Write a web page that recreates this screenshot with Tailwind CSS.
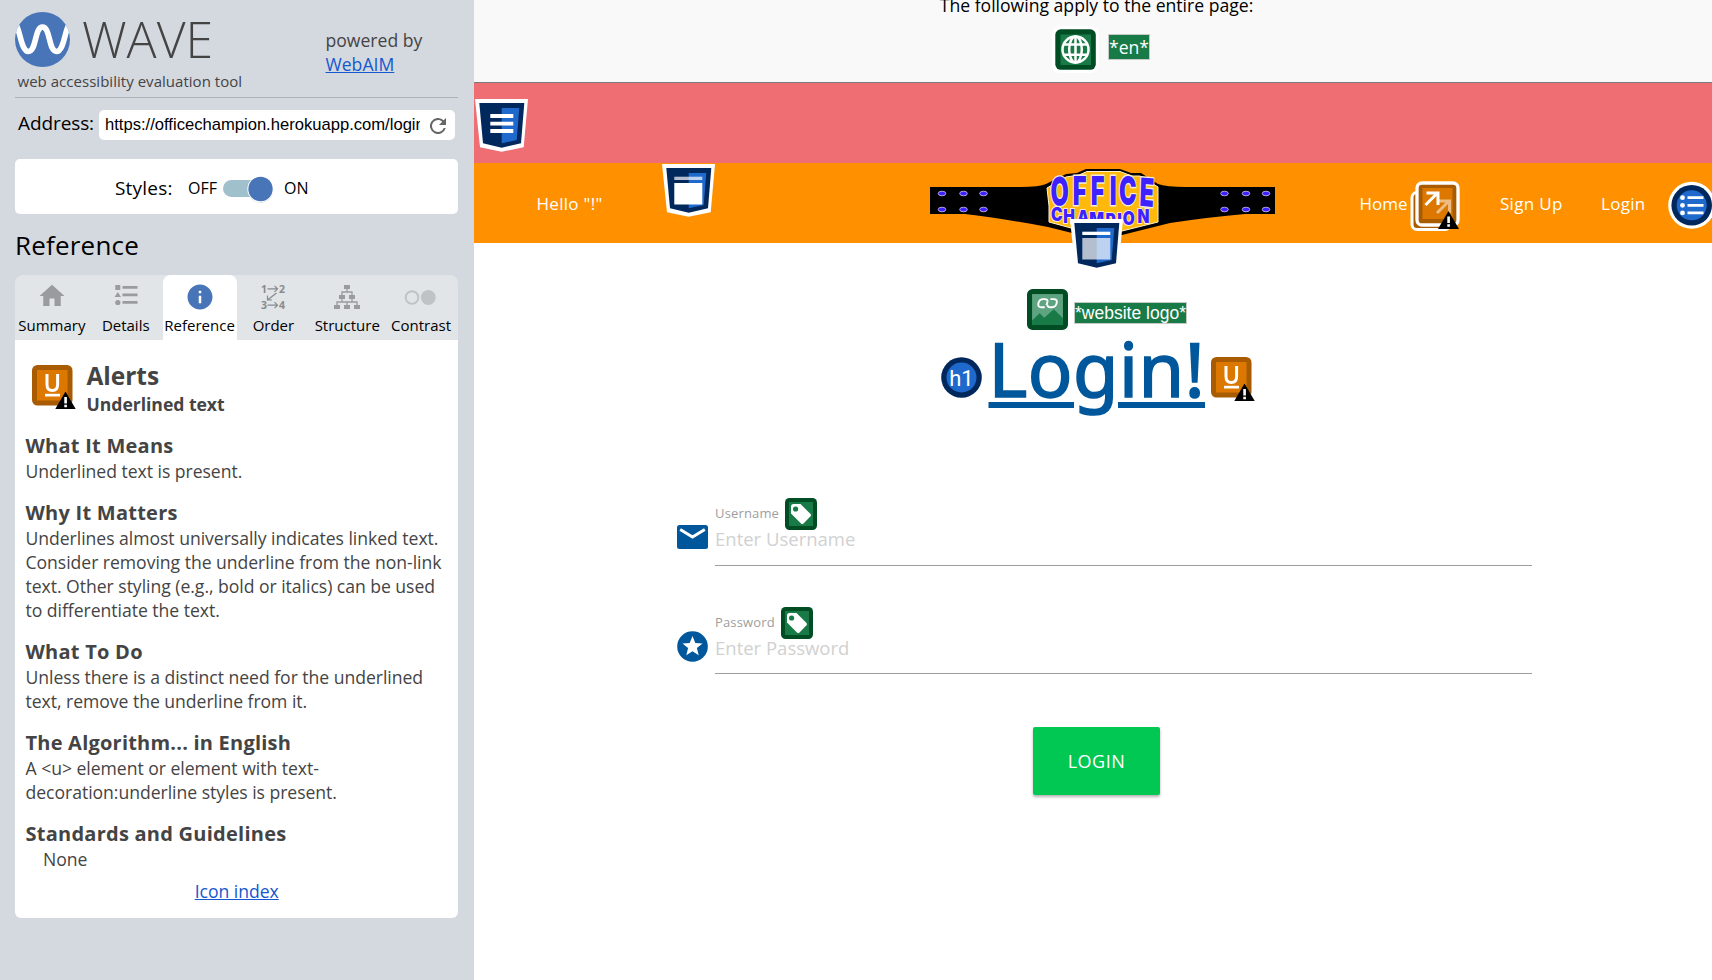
<!DOCTYPE html>
<html lang="en">
<head>
<meta charset="utf-8">
<title>WAVE</title>
<script src="https://cdn.jsdelivr.net/npm/@tailwindcss/browser@4"></script>
</head>
<body class="w-[1712px] h-[980px] overflow-hidden bg-white font-['Open_Sans',sans-serif] text-black">
<svg class="hidden">
  <defs>
    <symbol id="tri" viewBox="0 0 21 18"><path d="M10.5 0L21 18H0Z" fill="#000"/><path d="M9.3 5.500h2.600v6.500h-2.600zM9.300 13.300h2.600v2.400h-2.600z" fill="#fff"/></symbol>
    <symbol id="shield" viewBox="0 0 53 53"><path d="M0 0H53L48.700 48.300L26.600 52.700L5 48.300Z" fill="#fff"/><path d="M4.300 4H49.300L46 44.300L26.700 48.700L8 44.300Z" fill="#00285c"/><path d="M26.700 9H44.300L41.700 41L26.700 44.300Z" fill="#1f69cc"/></symbol>
    <symbol id="tag" viewBox="0 0 32 32"><rect width="32" height="32" rx="4.500" fill="#004d24"/><rect x="4" y="4" width="24" height="24" fill="#187a47"/><path d="M6 8.500A2.500 2.500 0 0 1 8.500 6H15.500L25.500 16Q26.500 17.200 25.500 18.300L18.500 25.500Q17.300 26.500 16 25.500L6 15.500Z" fill="#fff"/><circle cx="10.600" cy="11" r="2.600" fill="#187a47"/></symbol>
    <symbol id="ubadge" viewBox="0 0 44 44"><rect width="40.500" height="40.500" rx="5.500" fill="#a85b00"/><rect x="5" y="5" width="30.500" height="30.500" fill="#dc7800"/><path d="M15 9V19.500Q15 25.500 20.300 25.500Q25.600 25.500 25.600 19.500V9" fill="none" stroke="#fff" stroke-width="3"/><path d="M13 28.800H28V31.500H13Z" fill="#fff"/><use href="#tri" x="23" y="26.500" width="21" height="18"/></symbol>
  </defs>
</svg>
<div class="flex h-full">
<aside class="w-[474px] h-full shrink-0 bg-[#d4d8df] pl-[15px] pt-[12px] pr-[16px]">
  <header class="flex h-[86px] border-b border-[#adb2b4] text-[#444]">
    <div class="w-[310px]">
      <div class="flex h-[55px]">
        <svg class="size-[55px]" viewBox="0 0 55 55"><clipPath id="c"><circle cx="27.500" cy="27.500" r="27.500"/></clipPath><circle cx="27.500" cy="27.500" r="27.500" fill="#4775b7"/><path d="M1 13C5 17 6 39.500 13.500 39.500C21.500 39.500 19.500 15 27.500 15C35.500 15 33.500 39.500 41.500 39.500C49 39.500 50 17 54 13" fill="none" stroke="#fff" stroke-width="5.600" clip-path="url(#c)"/></svg>
        <span class="ml-[12px] text-[50px] leading-[55px] font-light whitespace-nowrap">WAVE</span>
      </div>
      <div class="mt-[2px] ml-[2.500px] leading-[24px]"><span class="text-[15px] tracking-[0.030px] whitespace-nowrap">web accessibility evaluation tool</span></div>
    </div>
    <div class="mt-[16px] pl-[0.500px] text-[17.600px] leading-[24px] whitespace-nowrap"><span>powered by</span><br><a class="text-[#1558d0] underline">WebAIM</a></div>
  </header>
  <div class="mt-[12px] flex h-[30px]">
    <div class="w-[84px] pl-[3px] leading-[26px]"><span class="text-[19px] tracking-[-0.100px] whitespace-nowrap">Address:</span></div>
    <div class="flex h-[30px] w-[356px] items-center rounded-[5px] bg-white pl-[6px]">
      <div class="w-[315px] overflow-hidden leading-[28px] whitespace-nowrap font-['Liberation_Sans',sans-serif] text-[16.600px]">https://officechampion.herokuapp.com/login</div>
      <svg class="ml-[9.500px] mt-px size-[16px]" viewBox="0 0 16 16"><path d="M13.650 2.350A8 8 0 1 0 15.730 10H13.650A6 6 0 1 1 8 2c1.660 0 3.140.690 4.220 1.780L9 7h7V0l-2.350 2.350z" fill="#666"/></svg>
    </div>
  </div>
  <div class="mt-[19px] flex h-[55px] items-center rounded-[5px] bg-white pl-[100px] pt-[3px]">
    <div class="w-[73px]"><span class="text-[19px] tracking-[0.200px] whitespace-nowrap">Styles:</span></div>
    <div class="w-[35px]"><span class="text-[16px]">OFF</span></div>
    <svg class="h-[32px] w-[54px]" viewBox="0 0 54 32"><rect x="0" y="8" width="46" height="17" rx="8.500" fill="#a0c1cb"/><circle cx="37.500" cy="18" r="12.800" fill="#000" opacity=".15"/><circle cx="37.500" cy="17" r="13.200" fill="#fff"/><circle cx="37.500" cy="17" r="12.200" fill="#4775b7"/></svg>
    <div class="ml-[7px]"><span class="text-[16px]">ON</span></div>
  </div>
  <h1 class="mt-[14px] h-[47px] leading-[34px] tracking-[0.200px] text-[26px] whitespace-nowrap">Reference</h1>
  <nav class="grid grid-cols-6 h-[65px] rounded-t-[8px] bg-[#e1e5e8] text-[15px] leading-[20px] text-center whitespace-nowrap">
    <div class="flex flex-col items-center pt-[7px]"><svg class="-mt-px mb-px ml-px size-[30px] shrink-0" viewBox="0 0 24 24"><path d="M10 20v-6h4v6h5v-8h3L12 3 2 12h3v8z" fill="#999b9d"/></svg><span class="mt-[3px]">Summary</span></div>
    <div class="flex flex-col items-center pt-[7px]"><svg class="size-[30px] shrink-0" viewBox="0 0 30 30" fill="#999b9d"><path d="M4.300 3h5v5h-5zM6.800 10l3.200 5H3.600z"/><circle cx="6.800" cy="20.500" r="2.600"/><path d="M11.500 4h15v2.700h-15zM11.500 11.500h15v2.700h-15zM11.500 19h15v2.700h-15z"/></svg><span class="mt-[3px]">Details</span></div>
    <div class="flex flex-col items-center rounded-t-[8px] bg-white pt-[7px]"><svg class="size-[30px] shrink-0" viewBox="0 0 24 24"><path d="M12 2C6.480 2 2 6.480 2 12s4.480 10 10 10 10-4.480 10-10S17.520 2 12 2zm1 15h-2v-6h2v6zm0-8h-2V7h2v2z" fill="#4775b7"/></svg><span class="mt-[3px]">Reference</span></div>
    <div class="flex flex-col items-center pt-[7px]"><svg class="size-[30px] shrink-0" viewBox="0 0 30 30" fill="#888b8d" font-family="Open Sans" font-size="10.500" font-weight="700"><text x="3" y="10.500">1</text><text x="21" y="10.500">2</text><text x="3" y="27">3</text><text x="21" y="27">4</text><path d="M9.500 6.800h10M16.500 3.800l3 3-3 3M9.500 23.200h10M16.500 20.200l3 3-3 3M18.500 11l-9 7M9.500 13.500v4.500h4.500" fill="none" stroke="#888b8d" stroke-width="1.200"/></svg><span class="mt-[3px]">Order</span></div>
    <div class="flex flex-col items-center pt-[7px]"><svg class="size-[30px] shrink-0" viewBox="0 0 30 30" fill="#999b9d"><path d="M12 3h6v4h-6zM7 13h6v4H7zM17 13h6v4h-6zM2 23h6v4H2zM12 23h6v4h-6zM22 23h6v4h-6z"/><path d="M15 7v3M10 13v-3h10v3M10 17v3M20 17v3M5 23v-3h20v3M15 20v3" fill="none" stroke="#999b9d" stroke-width="1.300"/></svg><span class="mt-[3px]">Structure</span></div>
    <div class="flex flex-col items-center pt-[7px]"><svg class="h-[30px] w-[32px] shrink-0 -ml-[2px]" viewBox="0 0 32 30"><circle cx="8" cy="15.500" r="6.300" fill="none" stroke="#bfc3c5" stroke-width="2"/><circle cx="24.300" cy="15.500" r="7.400" fill="#bfc3c5"/></svg><span class="mt-[3px]">Contrast</span></div>
  </nav>
  <main class="h-[578px] rounded-b-[6px] bg-white pl-[10.500px] text-[17.600px] leading-[24px] tracking-[-0.035px] text-[#444] whitespace-nowrap">
    <div class="flex pt-[19px] pl-[6.500px]">
      <svg class="mt-[6px] size-[44px]" viewBox="0 0 44 44"><use href="#ubadge"/></svg>
      <div class="ml-[10.500px] font-bold"><div class="h-[32px] leading-[34px] text-[24.500px]">Alerts</div><div class="h-[41px] leading-[26px]">Underlined text</div></div>
    </div>
    <h2 class="leading-[27px] text-[20px] font-bold tracking-[0.250px]">What It Means</h2>
    <p class="mb-[16px]">Underlined text is present.</p>
    <h2 class="leading-[27px] text-[20px] font-bold tracking-[0.250px]">Why It Matters</h2>
    <p class="mb-[16px]">Underlines almost universally indicates linked text.<br>Consider removing the underline from the non-link<br>text. Other styling (e.g., bold or italics) can be used<br>to differentiate the text.</p>
    <h2 class="leading-[27px] text-[20px] font-bold tracking-[0.250px]">What To Do</h2>
    <p class="mb-[16px]">Unless there is a distinct need for the underlined<br>text, remove the underline from it.</p>
    <h2 class="leading-[27px] text-[20px] font-bold tracking-[0.220px]">The Algorithm... in English</h2>
    <p class="mb-[16px]">A &lt;u&gt; element or element with text-<br>decoration:underline styles is present.</p>
    <h2 class="leading-[27px] text-[20px] font-bold tracking-[0.250px]">Standards and Guidelines</h2>
    <p class="mb-[8px] pl-[17.500px]">None</p>
    <p class="pr-[10px] text-center"><a class="text-[#1558d0] underline">Icon index</a></p>
  </main>
</aside>
<section class="relative w-[1238px] h-full">
  <div class="flow-root h-[83px] border-b border-[#7b7b7b] bg-[#f9f9f9] text-center whitespace-nowrap text-[17.600px]">
    <p class="-mt-[7px] h-[33px] leading-[24px] pl-[7px]">The following apply to the entire page:</p>
    <div class="flex pl-[578px]">
      <svg class="size-[47px]" viewBox="0 0 47 47"><rect width="47" height="47" rx="8" fill="#fff"/><rect x="3.300" y="3.300" width="40.500" height="40.500" rx="5.500" fill="#004d24"/><rect x="8.500" y="8.500" width="30.500" height="30.500" fill="#187a47"/><g fill="none" stroke="#fff" stroke-width="2.500"><circle cx="23.500" cy="23.500" r="13"/><ellipse cx="23.500" cy="23.500" rx="6.300" ry="13"/><path d="M12 18.500H35M12 28.700H35M23.500 10.500V36.500"/></g></svg>
      <div class="mt-[8px] ml-[9px] h-[26px] w-[42px] border border-[#c8cac8] bg-[#187a47] leading-[24px] text-white">*en*</div>
    </div>
  </div>
  <div class="h-[80px] bg-[#ee6e73]"></div>
  <nav class="flex h-[80px] bg-[#ff9100] pt-px text-[17px] leading-[80px] text-white whitespace-nowrap">
    <div class="w-[885.500px] pl-[62.500px] tracking-[0.300px]">Hello "!"</div>
    <div class="w-[140.500px]">Home</div>
    <div class="w-[101px] tracking-[0.300px]">Sign Up</div>
    <div class="tracking-[0.300px]">Login</div>
  </nav>
  <svg class="absolute left-[1px] top-[99px] size-[53px]" viewBox="0 0 53 53"><use href="#shield"/><path d="M15.300 15h23v4h-23zM15.300 22.700h23v3.700h-23zM15.300 30h23v4h-23z" fill="#fff"/></svg>
  <svg class="absolute left-[188px] top-[164px] size-[53px]" viewBox="0 0 53 53"><use href="#shield"/><path d="M12.300 12.700h28V16h-28z" fill="#fff" opacity=".7"/><path d="M12.300 19h28v21.500h-28z" fill="#fff"/></svg>
  <svg class="absolute left-[456px] top-[169px] h-[67px] w-[346px]" viewBox="0 0 346 67">
    <path d="M0 18H90Q110 18 116 15L136 5L147 4L156 0H190L201 4H211L228 15Q236 18 256 18H345V45H315Q280 48 240 54L192 66H150L118 58Q70 49 35 45H0Z" fill="#000"/>
    <path d="M117 19L136 8L149 6L157 2.500H190L202 7L210 7L228 18V53L192 62H152L119 53V37Z" fill="#ffb80c" stroke="#fff4d0" stroke-width="1"/>
    <g fill="#3d22ff" stroke="#e6d9ff" stroke-width=".7"><ellipse cx="12" cy="24.500" rx="3.800" ry="2.300"/><ellipse cx="33.500" cy="24.500" rx="3.800" ry="2.300"/><ellipse cx="53.500" cy="24.500" rx="3.800" ry="2.300"/><ellipse cx="12" cy="40.500" rx="3.800" ry="2.300"/><ellipse cx="33.500" cy="40.500" rx="3.800" ry="2.300"/><ellipse cx="53.500" cy="40.500" rx="3.800" ry="2.300"/><ellipse cx="294.500" cy="24.500" rx="3.800" ry="2.300"/><ellipse cx="316" cy="24.500" rx="3.800" ry="2.300"/><ellipse cx="336" cy="24.500" rx="3.800" ry="2.300"/><ellipse cx="294.500" cy="40.500" rx="3.800" ry="2.300"/><ellipse cx="316" cy="40.500" rx="3.800" ry="2.300"/><ellipse cx="336" cy="40.500" rx="3.800" ry="2.300"/></g>
    <g font-family="Inter" font-weight="900" fill="#3d22ff" stroke="#f6ecd8" stroke-width="2" paint-order="stroke">
      <text transform="scale(.84 1.400)" font-size="28" x="144 170 191.500 214 225 249" y="26.600 25.600 25.600 25.600 25.600 26.200" rotate="-3 0 0 0 0 3">OFFICE</text>
      <text transform="scale(.84 1)" font-size="18.500" x="144 158.500 175 189.500 209 223 229.500 247" y="52 54 55.500 57 58 58 56.500 54">CHAMPION</text>
    </g>
  </svg>
  <svg class="absolute left-[596px] top-[219px] size-[53px]" viewBox="0 0 53 53"><use href="#shield"/><path d="M12.300 12.700h28V16h-28z" fill="#fff"/><path d="M12.300 19h28v21.500h-28z" fill="#fff" opacity=".7"/></svg>
  <svg class="absolute left-[936px] top-[181px] size-[50px]" viewBox="0 0 50 50"><rect x="2" y="11.500" width="38" height="37" rx="5" fill="#a85b00" stroke="#fff" stroke-width="3"/><rect x="7" y="2" width="41" height="42" rx="5" fill="#a85b00" stroke="#fff" stroke-width="3.300"/><rect x="12.500" y="7" width="30" height="31" fill="#dc7800"/><g fill="none" stroke="#fff" stroke-width="3"><path d="M15.500 24L27 12.500M16.500 12H28V24"/><path d="M27 32L38.500 20.500M28 20H39.500V32" opacity=".5"/></g><use href="#tri" x="28" y="30" width="21" height="18"/></svg>
  <svg class="absolute left-[1194px] top-[181px] size-[48px]" viewBox="0 0 48 48"><circle cx="23.700" cy="24.300" r="23.500" fill="#fff"/><circle cx="23.700" cy="24.300" r="20.300" fill="#00285c"/><circle cx="23.700" cy="24.300" r="15" fill="#1f69cc"/><g fill="#fff"><circle cx="14.500" cy="16.700" r="2.400"/><circle cx="14.500" cy="24.300" r="2.400"/><circle cx="14.500" cy="31.900" r="2.400"/><path d="M19.500 15.300h16v2.800h-16zM19.500 22.900h16v2.800h-16zM19.500 30.500h16v2.800h-16z"/></g></svg>

  <div class="flex h-[87px] pt-[46px] pl-[552.500px]">
    <svg class="size-[41px]" viewBox="0 0 40.500 40.500"><rect width="40.500" height="40.500" rx="5.500" fill="#004d24"/><rect x="5" y="5" width="30.500" height="30.500" fill="#5fa481"/><path d="M5 31L12.500 24L17 28.500L26.500 20L35.500 29V35.500H5Z" fill="#187a47"/><g fill="none" stroke="#fff" stroke-width="1.900"><path id="ln" d="M17.500 18H14Q10.500 18 11.200 14.300Q12 10 16 10H17.500Q20.800 10 20.200 12.500"/><path id="ln2" d="M20.200 12.500L19.300 16"/><use href="#ln" transform="rotate(180 20.300 14)"/></g></svg>
    <div class="mt-[13px] ml-[6.500px] h-[22px] w-[113px] border border-[#c8cac8] bg-[#187a47] text-center font-['Liberation_Sans',sans-serif] text-[17.500px] leading-[20px] text-white whitespace-nowrap">*website logo*</div>
  </div>
  <div class="flex h-[154px] pl-[467px] text-[#01579b]">
    <svg class="mt-[27px] size-[41px]" viewBox="0 0 41 41"><circle cx="20.500" cy="20.500" r="20.300" fill="#00285c"/><circle cx="20.500" cy="20.500" r="15" fill="#1f69cc"/><text x="20.500" y="28.500" text-anchor="middle" font-family="Roboto" font-size="22" fill="#fff">h1</text></svg>
    <h1 class="ml-[6.500px] h-[100px] w-[216px] text-[74px] leading-[78px] whitespace-nowrap font-['Noto_Sans','Open_Sans',sans-serif]"><span class="tracking-[0.450px] underline decoration-[6px] underline-offset-[5px] [-webkit-text-stroke:1.600px_#01579b]">Login!</span></h1>
    <svg class="mt-[27px] ml-[6.500px] size-[44px]" viewBox="0 0 44 44"><use href="#ubadge"/></svg>
  </div>
  <form class="pl-[203px] whitespace-nowrap">
    <div class="flex h-[109px] pt-[14px]">
      <svg class="mt-[27px] h-[24px] w-[31px]" viewBox="0 0 31 24"><rect width="31" height="24" rx="2.500" fill="#01579b"/><path d="M3.200 4.500L15.500 12L27.800 4.500" fill="none" stroke="#fff" stroke-width="2.900"/></svg>
      <div class="ml-[7px] h-[68px] w-[817px] border-b border-[#9e9e9e]">
        <div class="flex h-[32px] text-[13px] leading-[30px] tracking-[0.150px] text-[#9e9e9e]"><span class="w-[70px]">Username</span><svg class="size-[32px]"><use href="#tag"/></svg></div>
        <div class="-mt-[4px] leading-[26px] text-[18.500px] text-[#d1d1d1]">Enter Username</div>
      </div>
    </div>
    <div class="flex h-[121px] pt-[14px]">
      <svg class="mt-[23.500px] size-[31px]" viewBox="0 0 31 31"><circle cx="15.500" cy="15.500" r="15.300" fill="#01579b"/><path d="M15.500 5L18.300 11.900L25.500 12.400L19.900 17.100L21.700 24.200L15.500 20.300L9.300 24.200L11.100 17.100L5.500 12.400L12.700 11.900Z" fill="#fff"/></svg>
      <div class="ml-[7px] h-[67px] w-[817px] border-b border-[#9e9e9e]">
        <div class="flex h-[32px] text-[13px] leading-[30px] tracking-[0.150px] text-[#9e9e9e]"><span class="w-[66px]">Password</span><svg class="size-[32px]"><use href="#tag"/></svg></div>
        <div class="-mt-[4px] leading-[26px] text-[18.500px] text-[#d1d1d1]">Enter Password</div>
      </div>
    </div>
  </form>
  <div class="pl-[559px] pt-[13px]"><div class="h-[68px] w-[127px] rounded-[2px] bg-[#00c853] text-center text-[18px] tracking-[0.500px] leading-[68px] text-white shadow-[0_2px_3px_rgba(0,0,0,0.3)]">LOGIN</div></div>
</section>
</div>
</body>
</html>
